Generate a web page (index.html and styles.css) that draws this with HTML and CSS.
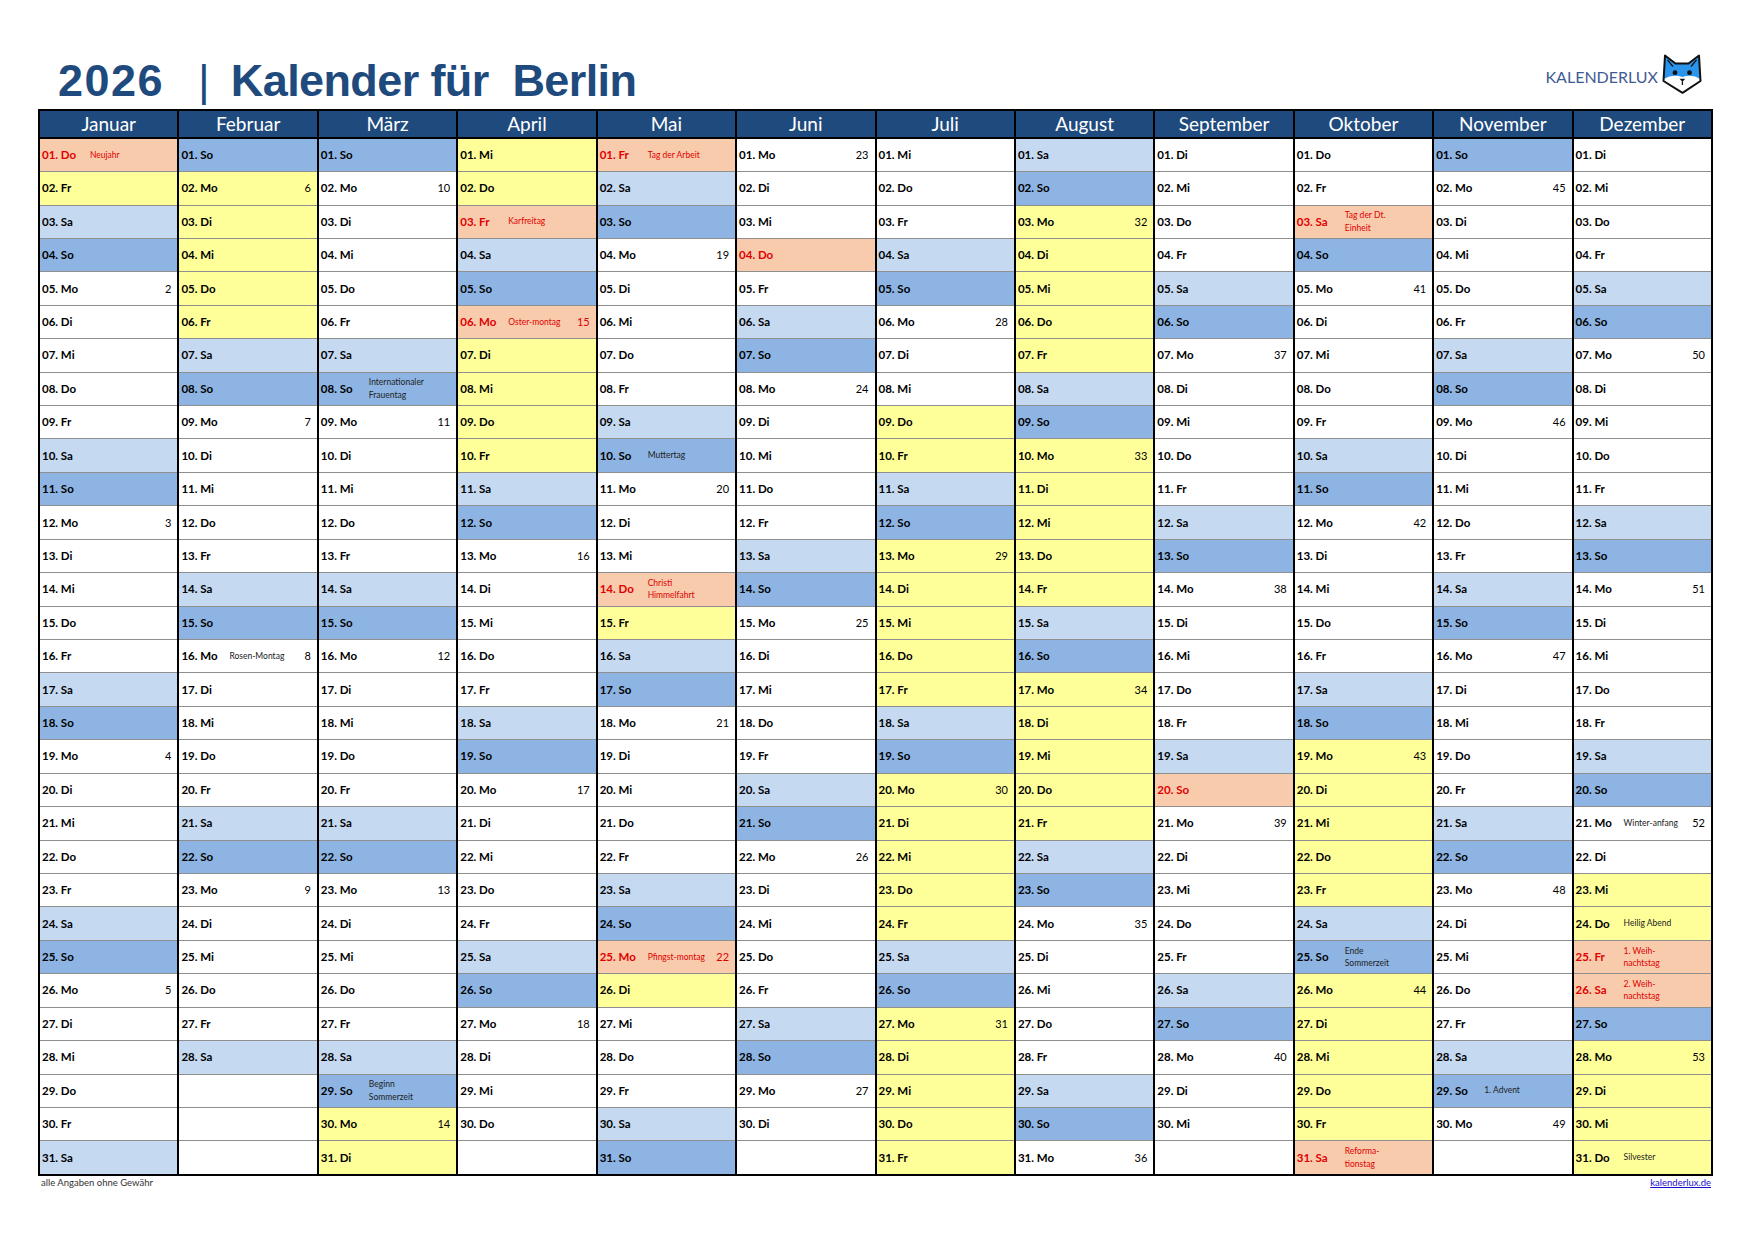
FILE: index.html
```html
<!DOCTYPE html>
<html lang="de">
<head>
<meta charset="utf-8">
<title>2026 | Kalender für Berlin</title>
<link rel="stylesheet" href="styles.css">
</head>
<body>
<div class="page">
  <header class="top">
    <h1 class="title"><span class="year">2026</span><span class="pipe">|</span><span class="place">Kalender für&nbsp; Berlin</span></h1>
    <div class="logo">
      <span class="logo-text">KALENDERLUX</span>
      <svg class="fox" viewBox="0 0 40 40" width="40" height="40" aria-hidden="true">
        <path d="M3 1.5 L13.5 9.5 H26.5 L37 1.5 L38.5 27 L20.5 38.8 L1.5 27 Z" fill="#2b95ec"/>
        <path d="M1.6 25 Q11 19.5 20.5 23 Q30 19.5 38.4 25 L38.5 27 L20.5 38.8 L1.5 27 Z" fill="#fff"/>
        <path d="M3 1.5 L13.5 9.5 H26.5 L37 1.5 L38.5 27 L20.5 38.8 L1.5 27 Z" fill="none" stroke="#111" stroke-width="2" stroke-linejoin="round"/>
        <path d="M5.5 6 L11 12.5 M34.5 6 L29 12.5" stroke="#111" stroke-width="1.2" fill="none"/>
        <circle cx="13" cy="18.7" r="2.4" fill="#111"/>
        <circle cx="27.5" cy="18.7" r="2.4" fill="#111"/>
        <path d="M17.6 24.8 H23.2 L20.4 28 Z" fill="#111"/>
        <path d="M20.4 27.5 V31" stroke="#111" stroke-width="1.3"/>
      </svg>
    </div>
  </header>

  <div class="cal">
    <div class="m">
      <div class="mh">Januar</div>
      <div class="c hol"><b>01. Do</b><small>Neujahr</small></div>
      <div class="c fe"><b>02. Fr</b></div>
      <div class="c sa"><b>03. Sa</b></div>
      <div class="c so"><b>04. So</b></div>
      <div class="c"><b>05. Mo</b><span>2</span></div>
      <div class="c"><b>06. Di</b></div>
      <div class="c"><b>07. Mi</b></div>
      <div class="c"><b>08. Do</b></div>
      <div class="c"><b>09. Fr</b></div>
      <div class="c sa"><b>10. Sa</b></div>
      <div class="c so"><b>11. So</b></div>
      <div class="c"><b>12. Mo</b><span>3</span></div>
      <div class="c"><b>13. Di</b></div>
      <div class="c"><b>14. Mi</b></div>
      <div class="c"><b>15. Do</b></div>
      <div class="c"><b>16. Fr</b></div>
      <div class="c sa"><b>17. Sa</b></div>
      <div class="c so"><b>18. So</b></div>
      <div class="c"><b>19. Mo</b><span>4</span></div>
      <div class="c"><b>20. Di</b></div>
      <div class="c"><b>21. Mi</b></div>
      <div class="c"><b>22. Do</b></div>
      <div class="c"><b>23. Fr</b></div>
      <div class="c sa"><b>24. Sa</b></div>
      <div class="c so"><b>25. So</b></div>
      <div class="c"><b>26. Mo</b><span>5</span></div>
      <div class="c"><b>27. Di</b></div>
      <div class="c"><b>28. Mi</b></div>
      <div class="c"><b>29. Do</b></div>
      <div class="c"><b>30. Fr</b></div>
      <div class="c sa"><b>31. Sa</b></div>
    </div>

    <div class="m">
      <div class="mh">Februar</div>
      <div class="c so"><b>01. So</b></div>
      <div class="c fe"><b>02. Mo</b><span>6</span></div>
      <div class="c fe"><b>03. Di</b></div>
      <div class="c fe"><b>04. Mi</b></div>
      <div class="c fe"><b>05. Do</b></div>
      <div class="c fe"><b>06. Fr</b></div>
      <div class="c sa"><b>07. Sa</b></div>
      <div class="c so"><b>08. So</b></div>
      <div class="c"><b>09. Mo</b><span>7</span></div>
      <div class="c"><b>10. Di</b></div>
      <div class="c"><b>11. Mi</b></div>
      <div class="c"><b>12. Do</b></div>
      <div class="c"><b>13. Fr</b></div>
      <div class="c sa"><b>14. Sa</b></div>
      <div class="c so"><b>15. So</b></div>
      <div class="c"><b>16. Mo</b><small>Rosen-Montag</small><span>8</span></div>
      <div class="c"><b>17. Di</b></div>
      <div class="c"><b>18. Mi</b></div>
      <div class="c"><b>19. Do</b></div>
      <div class="c"><b>20. Fr</b></div>
      <div class="c sa"><b>21. Sa</b></div>
      <div class="c so"><b>22. So</b></div>
      <div class="c"><b>23. Mo</b><span>9</span></div>
      <div class="c"><b>24. Di</b></div>
      <div class="c"><b>25. Mi</b></div>
      <div class="c"><b>26. Do</b></div>
      <div class="c"><b>27. Fr</b></div>
      <div class="c sa"><b>28. Sa</b></div>
      <div class="c"></div>
      <div class="c"></div>
      <div class="c"></div>
    </div>

    <div class="m">
      <div class="mh">März</div>
      <div class="c so"><b>01. So</b></div>
      <div class="c"><b>02. Mo</b><span>10</span></div>
      <div class="c"><b>03. Di</b></div>
      <div class="c"><b>04. Mi</b></div>
      <div class="c"><b>05. Do</b></div>
      <div class="c"><b>06. Fr</b></div>
      <div class="c sa"><b>07. Sa</b></div>
      <div class="c so"><b>08. So</b><small>Internationaler<br>Frauentag</small></div>
      <div class="c"><b>09. Mo</b><span>11</span></div>
      <div class="c"><b>10. Di</b></div>
      <div class="c"><b>11. Mi</b></div>
      <div class="c"><b>12. Do</b></div>
      <div class="c"><b>13. Fr</b></div>
      <div class="c sa"><b>14. Sa</b></div>
      <div class="c so"><b>15. So</b></div>
      <div class="c"><b>16. Mo</b><span>12</span></div>
      <div class="c"><b>17. Di</b></div>
      <div class="c"><b>18. Mi</b></div>
      <div class="c"><b>19. Do</b></div>
      <div class="c"><b>20. Fr</b></div>
      <div class="c sa"><b>21. Sa</b></div>
      <div class="c so"><b>22. So</b></div>
      <div class="c"><b>23. Mo</b><span>13</span></div>
      <div class="c"><b>24. Di</b></div>
      <div class="c"><b>25. Mi</b></div>
      <div class="c"><b>26. Do</b></div>
      <div class="c"><b>27. Fr</b></div>
      <div class="c sa"><b>28. Sa</b></div>
      <div class="c so"><b>29. So</b><small>Beginn<br>Sommerzeit</small></div>
      <div class="c fe"><b>30. Mo</b><span>14</span></div>
      <div class="c fe"><b>31. Di</b></div>
    </div>

    <div class="m">
      <div class="mh">April</div>
      <div class="c fe"><b>01. Mi</b></div>
      <div class="c fe"><b>02. Do</b></div>
      <div class="c hol"><b>03. Fr</b><small>Karfreitag</small></div>
      <div class="c sa"><b>04. Sa</b></div>
      <div class="c so"><b>05. So</b></div>
      <div class="c hol"><b>06. Mo</b><small>Oster-montag</small><span>15</span></div>
      <div class="c fe"><b>07. Di</b></div>
      <div class="c fe"><b>08. Mi</b></div>
      <div class="c fe"><b>09. Do</b></div>
      <div class="c fe"><b>10. Fr</b></div>
      <div class="c sa"><b>11. Sa</b></div>
      <div class="c so"><b>12. So</b></div>
      <div class="c"><b>13. Mo</b><span>16</span></div>
      <div class="c"><b>14. Di</b></div>
      <div class="c"><b>15. Mi</b></div>
      <div class="c"><b>16. Do</b></div>
      <div class="c"><b>17. Fr</b></div>
      <div class="c sa"><b>18. Sa</b></div>
      <div class="c so"><b>19. So</b></div>
      <div class="c"><b>20. Mo</b><span>17</span></div>
      <div class="c"><b>21. Di</b></div>
      <div class="c"><b>22. Mi</b></div>
      <div class="c"><b>23. Do</b></div>
      <div class="c"><b>24. Fr</b></div>
      <div class="c sa"><b>25. Sa</b></div>
      <div class="c so"><b>26. So</b></div>
      <div class="c"><b>27. Mo</b><span>18</span></div>
      <div class="c"><b>28. Di</b></div>
      <div class="c"><b>29. Mi</b></div>
      <div class="c"><b>30. Do</b></div>
      <div class="c"></div>
    </div>

    <div class="m">
      <div class="mh">Mai</div>
      <div class="c hol"><b>01. Fr</b><small>Tag der Arbeit</small></div>
      <div class="c sa"><b>02. Sa</b></div>
      <div class="c so"><b>03. So</b></div>
      <div class="c"><b>04. Mo</b><span>19</span></div>
      <div class="c"><b>05. Di</b></div>
      <div class="c"><b>06. Mi</b></div>
      <div class="c"><b>07. Do</b></div>
      <div class="c"><b>08. Fr</b></div>
      <div class="c sa"><b>09. Sa</b></div>
      <div class="c so"><b>10. So</b><small>Muttertag</small></div>
      <div class="c"><b>11. Mo</b><span>20</span></div>
      <div class="c"><b>12. Di</b></div>
      <div class="c"><b>13. Mi</b></div>
      <div class="c hol"><b>14. Do</b><small>Christi<br>Himmelfahrt</small></div>
      <div class="c fe"><b>15. Fr</b></div>
      <div class="c sa"><b>16. Sa</b></div>
      <div class="c so"><b>17. So</b></div>
      <div class="c"><b>18. Mo</b><span>21</span></div>
      <div class="c"><b>19. Di</b></div>
      <div class="c"><b>20. Mi</b></div>
      <div class="c"><b>21. Do</b></div>
      <div class="c"><b>22. Fr</b></div>
      <div class="c sa"><b>23. Sa</b></div>
      <div class="c so"><b>24. So</b></div>
      <div class="c hol"><b>25. Mo</b><small>Pfingst-montag</small><span>22</span></div>
      <div class="c fe"><b>26. Di</b></div>
      <div class="c"><b>27. Mi</b></div>
      <div class="c"><b>28. Do</b></div>
      <div class="c"><b>29. Fr</b></div>
      <div class="c sa"><b>30. Sa</b></div>
      <div class="c so"><b>31. So</b></div>
    </div>

    <div class="m">
      <div class="mh">Juni</div>
      <div class="c"><b>01. Mo</b><span>23</span></div>
      <div class="c"><b>02. Di</b></div>
      <div class="c"><b>03. Mi</b></div>
      <div class="c hol"><b>04. Do</b></div>
      <div class="c"><b>05. Fr</b></div>
      <div class="c sa"><b>06. Sa</b></div>
      <div class="c so"><b>07. So</b></div>
      <div class="c"><b>08. Mo</b><span>24</span></div>
      <div class="c"><b>09. Di</b></div>
      <div class="c"><b>10. Mi</b></div>
      <div class="c"><b>11. Do</b></div>
      <div class="c"><b>12. Fr</b></div>
      <div class="c sa"><b>13. Sa</b></div>
      <div class="c so"><b>14. So</b></div>
      <div class="c"><b>15. Mo</b><span>25</span></div>
      <div class="c"><b>16. Di</b></div>
      <div class="c"><b>17. Mi</b></div>
      <div class="c"><b>18. Do</b></div>
      <div class="c"><b>19. Fr</b></div>
      <div class="c sa"><b>20. Sa</b></div>
      <div class="c so"><b>21. So</b></div>
      <div class="c"><b>22. Mo</b><span>26</span></div>
      <div class="c"><b>23. Di</b></div>
      <div class="c"><b>24. Mi</b></div>
      <div class="c"><b>25. Do</b></div>
      <div class="c"><b>26. Fr</b></div>
      <div class="c sa"><b>27. Sa</b></div>
      <div class="c so"><b>28. So</b></div>
      <div class="c"><b>29. Mo</b><span>27</span></div>
      <div class="c"><b>30. Di</b></div>
      <div class="c"></div>
    </div>

    <div class="m">
      <div class="mh">Juli</div>
      <div class="c"><b>01. Mi</b></div>
      <div class="c"><b>02. Do</b></div>
      <div class="c"><b>03. Fr</b></div>
      <div class="c sa"><b>04. Sa</b></div>
      <div class="c so"><b>05. So</b></div>
      <div class="c"><b>06. Mo</b><span>28</span></div>
      <div class="c"><b>07. Di</b></div>
      <div class="c"><b>08. Mi</b></div>
      <div class="c fe"><b>09. Do</b></div>
      <div class="c fe"><b>10. Fr</b></div>
      <div class="c sa"><b>11. Sa</b></div>
      <div class="c so"><b>12. So</b></div>
      <div class="c fe"><b>13. Mo</b><span>29</span></div>
      <div class="c fe"><b>14. Di</b></div>
      <div class="c fe"><b>15. Mi</b></div>
      <div class="c fe"><b>16. Do</b></div>
      <div class="c fe"><b>17. Fr</b></div>
      <div class="c sa"><b>18. Sa</b></div>
      <div class="c so"><b>19. So</b></div>
      <div class="c fe"><b>20. Mo</b><span>30</span></div>
      <div class="c fe"><b>21. Di</b></div>
      <div class="c fe"><b>22. Mi</b></div>
      <div class="c fe"><b>23. Do</b></div>
      <div class="c fe"><b>24. Fr</b></div>
      <div class="c sa"><b>25. Sa</b></div>
      <div class="c so"><b>26. So</b></div>
      <div class="c fe"><b>27. Mo</b><span>31</span></div>
      <div class="c fe"><b>28. Di</b></div>
      <div class="c fe"><b>29. Mi</b></div>
      <div class="c fe"><b>30. Do</b></div>
      <div class="c fe"><b>31. Fr</b></div>
    </div>

    <div class="m">
      <div class="mh">August</div>
      <div class="c sa"><b>01. Sa</b></div>
      <div class="c so"><b>02. So</b></div>
      <div class="c fe"><b>03. Mo</b><span>32</span></div>
      <div class="c fe"><b>04. Di</b></div>
      <div class="c fe"><b>05. Mi</b></div>
      <div class="c fe"><b>06. Do</b></div>
      <div class="c fe"><b>07. Fr</b></div>
      <div class="c sa"><b>08. Sa</b></div>
      <div class="c so"><b>09. So</b></div>
      <div class="c fe"><b>10. Mo</b><span>33</span></div>
      <div class="c fe"><b>11. Di</b></div>
      <div class="c fe"><b>12. Mi</b></div>
      <div class="c fe"><b>13. Do</b></div>
      <div class="c fe"><b>14. Fr</b></div>
      <div class="c sa"><b>15. Sa</b></div>
      <div class="c so"><b>16. So</b></div>
      <div class="c fe"><b>17. Mo</b><span>34</span></div>
      <div class="c fe"><b>18. Di</b></div>
      <div class="c fe"><b>19. Mi</b></div>
      <div class="c fe"><b>20. Do</b></div>
      <div class="c fe"><b>21. Fr</b></div>
      <div class="c sa"><b>22. Sa</b></div>
      <div class="c so"><b>23. So</b></div>
      <div class="c"><b>24. Mo</b><span>35</span></div>
      <div class="c"><b>25. Di</b></div>
      <div class="c"><b>26. Mi</b></div>
      <div class="c"><b>27. Do</b></div>
      <div class="c"><b>28. Fr</b></div>
      <div class="c sa"><b>29. Sa</b></div>
      <div class="c so"><b>30. So</b></div>
      <div class="c"><b>31. Mo</b><span>36</span></div>
    </div>

    <div class="m">
      <div class="mh">September</div>
      <div class="c"><b>01. Di</b></div>
      <div class="c"><b>02. Mi</b></div>
      <div class="c"><b>03. Do</b></div>
      <div class="c"><b>04. Fr</b></div>
      <div class="c sa"><b>05. Sa</b></div>
      <div class="c so"><b>06. So</b></div>
      <div class="c"><b>07. Mo</b><span>37</span></div>
      <div class="c"><b>08. Di</b></div>
      <div class="c"><b>09. Mi</b></div>
      <div class="c"><b>10. Do</b></div>
      <div class="c"><b>11. Fr</b></div>
      <div class="c sa"><b>12. Sa</b></div>
      <div class="c so"><b>13. So</b></div>
      <div class="c"><b>14. Mo</b><span>38</span></div>
      <div class="c"><b>15. Di</b></div>
      <div class="c"><b>16. Mi</b></div>
      <div class="c"><b>17. Do</b></div>
      <div class="c"><b>18. Fr</b></div>
      <div class="c sa"><b>19. Sa</b></div>
      <div class="c hol"><b>20. So</b></div>
      <div class="c"><b>21. Mo</b><span>39</span></div>
      <div class="c"><b>22. Di</b></div>
      <div class="c"><b>23. Mi</b></div>
      <div class="c"><b>24. Do</b></div>
      <div class="c"><b>25. Fr</b></div>
      <div class="c sa"><b>26. Sa</b></div>
      <div class="c so"><b>27. So</b></div>
      <div class="c"><b>28. Mo</b><span>40</span></div>
      <div class="c"><b>29. Di</b></div>
      <div class="c"><b>30. Mi</b></div>
      <div class="c"></div>
    </div>

    <div class="m">
      <div class="mh">Oktober</div>
      <div class="c"><b>01. Do</b></div>
      <div class="c"><b>02. Fr</b></div>
      <div class="c hol"><b>03. Sa</b><small>Tag der Dt.<br>Einheit</small></div>
      <div class="c so"><b>04. So</b></div>
      <div class="c"><b>05. Mo</b><span>41</span></div>
      <div class="c"><b>06. Di</b></div>
      <div class="c"><b>07. Mi</b></div>
      <div class="c"><b>08. Do</b></div>
      <div class="c"><b>09. Fr</b></div>
      <div class="c sa"><b>10. Sa</b></div>
      <div class="c so"><b>11. So</b></div>
      <div class="c"><b>12. Mo</b><span>42</span></div>
      <div class="c"><b>13. Di</b></div>
      <div class="c"><b>14. Mi</b></div>
      <div class="c"><b>15. Do</b></div>
      <div class="c"><b>16. Fr</b></div>
      <div class="c sa"><b>17. Sa</b></div>
      <div class="c so"><b>18. So</b></div>
      <div class="c fe"><b>19. Mo</b><span>43</span></div>
      <div class="c fe"><b>20. Di</b></div>
      <div class="c fe"><b>21. Mi</b></div>
      <div class="c fe"><b>22. Do</b></div>
      <div class="c fe"><b>23. Fr</b></div>
      <div class="c sa"><b>24. Sa</b></div>
      <div class="c so"><b>25. So</b><small>Ende<br>Sommerzeit</small></div>
      <div class="c fe"><b>26. Mo</b><span>44</span></div>
      <div class="c fe"><b>27. Di</b></div>
      <div class="c fe"><b>28. Mi</b></div>
      <div class="c fe"><b>29. Do</b></div>
      <div class="c fe"><b>30. Fr</b></div>
      <div class="c hol"><b>31. Sa</b><small>Reforma-<br>tionstag</small></div>
    </div>

    <div class="m">
      <div class="mh">November</div>
      <div class="c so"><b>01. So</b></div>
      <div class="c"><b>02. Mo</b><span>45</span></div>
      <div class="c"><b>03. Di</b></div>
      <div class="c"><b>04. Mi</b></div>
      <div class="c"><b>05. Do</b></div>
      <div class="c"><b>06. Fr</b></div>
      <div class="c sa"><b>07. Sa</b></div>
      <div class="c so"><b>08. So</b></div>
      <div class="c"><b>09. Mo</b><span>46</span></div>
      <div class="c"><b>10. Di</b></div>
      <div class="c"><b>11. Mi</b></div>
      <div class="c"><b>12. Do</b></div>
      <div class="c"><b>13. Fr</b></div>
      <div class="c sa"><b>14. Sa</b></div>
      <div class="c so"><b>15. So</b></div>
      <div class="c"><b>16. Mo</b><span>47</span></div>
      <div class="c"><b>17. Di</b></div>
      <div class="c"><b>18. Mi</b></div>
      <div class="c"><b>19. Do</b></div>
      <div class="c"><b>20. Fr</b></div>
      <div class="c sa"><b>21. Sa</b></div>
      <div class="c so"><b>22. So</b></div>
      <div class="c"><b>23. Mo</b><span>48</span></div>
      <div class="c"><b>24. Di</b></div>
      <div class="c"><b>25. Mi</b></div>
      <div class="c"><b>26. Do</b></div>
      <div class="c"><b>27. Fr</b></div>
      <div class="c sa"><b>28. Sa</b></div>
      <div class="c so"><b>29. So</b><small>1. Advent</small></div>
      <div class="c"><b>30. Mo</b><span>49</span></div>
      <div class="c"></div>
    </div>

    <div class="m">
      <div class="mh">Dezember</div>
      <div class="c"><b>01. Di</b></div>
      <div class="c"><b>02. Mi</b></div>
      <div class="c"><b>03. Do</b></div>
      <div class="c"><b>04. Fr</b></div>
      <div class="c sa"><b>05. Sa</b></div>
      <div class="c so"><b>06. So</b></div>
      <div class="c"><b>07. Mo</b><span>50</span></div>
      <div class="c"><b>08. Di</b></div>
      <div class="c"><b>09. Mi</b></div>
      <div class="c"><b>10. Do</b></div>
      <div class="c"><b>11. Fr</b></div>
      <div class="c sa"><b>12. Sa</b></div>
      <div class="c so"><b>13. So</b></div>
      <div class="c"><b>14. Mo</b><span>51</span></div>
      <div class="c"><b>15. Di</b></div>
      <div class="c"><b>16. Mi</b></div>
      <div class="c"><b>17. Do</b></div>
      <div class="c"><b>18. Fr</b></div>
      <div class="c sa"><b>19. Sa</b></div>
      <div class="c so"><b>20. So</b></div>
      <div class="c"><b>21. Mo</b><small>Winter-anfang</small><span>52</span></div>
      <div class="c"><b>22. Di</b></div>
      <div class="c fe"><b>23. Mi</b></div>
      <div class="c fe"><b>24. Do</b><small>Heilig Abend</small></div>
      <div class="c hol"><b>25. Fr</b><small>1. Weih-<br>nachtstag</small></div>
      <div class="c hol"><b>26. Sa</b><small>2. Weih-<br>nachtstag</small></div>
      <div class="c so"><b>27. So</b></div>
      <div class="c fe"><b>28. Mo</b><span>53</span></div>
      <div class="c fe"><b>29. Di</b></div>
      <div class="c fe"><b>30. Mi</b></div>
      <div class="c fe"><b>31. Do</b><small>Silvester</small></div>
    </div>
  </div>

  <footer class="foot">
    <span>alle Angaben ohne Gewähr</span>
    <a href="#">kalenderlux.de</a>
  </footer>
</div>
</body>
</html>
```

FILE: styles.css
```css
* { box-sizing: border-box; }

body {
  margin: 0;
  background: #fff;
  font-family: Lato, "Open Sans", "Liberation Sans", sans-serif;
  color: #000;
}

.page {
  width: 1753px;
  height: 1239px;
  padding-left: 38px;
}

.top {
  width: 1675px;
  height: 109px;
  display: flex;
  justify-content: space-between;
  align-items: flex-start;
}

.title {
  margin: 58px 0 0 20px;
  display: flex;
  font-family: "Liberation Sans", Arial, sans-serif;
  font-weight: 700;
  font-size: 45px;
  line-height: 45px;
  color: #1f4a7d;
  white-space: nowrap;
}

.year { letter-spacing: 1.5px; }

.pipe {
  margin: 0 21px 0 34px;
  font-weight: 400;
}

.place { letter-spacing: -0.6px; }

.logo {
  margin: 54px 11px 0 0;
  display: flex;
  align-items: flex-start;
  gap: 4px;
}

.logo-text {
  margin-top: 13px;
  font-family: Lato, "Open Sans", sans-serif;
  font-size: 16px;
  line-height: 20px;
  color: #3f5b93;
}

.fox { display: block; }

.cal {
  width: 1675px;
  height: 1067px;
  border: 2px solid #000;
  background: #000;
  display: grid;
  grid-template-columns: repeat(12, 1fr);
  column-gap: 2px;
}

.m {
  display: flex;
  flex-direction: column;
  background: #fff;
  min-width: 0;
}

.mh {
  flex: none;
  height: 27.7px;
  background: #1f4a7d;
  color: #fff;
  font-size: 19px;
  line-height: 25.7px;
  text-align: center;
  border-bottom: 2px solid #000;
}

.c {
  flex: 1 1 0;
  min-height: 0;
  display: flex;
  align-items: center;
  padding: 0 6px 0 2px;
  border-top: 1.6px solid #8f8f8f;
  font-size: 11.5px;
  line-height: 14px;
  white-space: nowrap;
}

.mh + .c { border-top: none; }

.c b {
  flex: none;
  width: 48px;
  font-weight: 700;
}

.c small {
  font-size: 8.5px;
  line-height: 12.5px;
  color: #222;
}

.c span {
  margin-left: auto;
  font-size: 11px;
}

.sa { background: #c5d9f1; }
.so { background: #8db4e2; }
.fe { background: #ffff99; }
.hol { background: #f8cbad; color: #e00000; }
.hol small { color: #e00000; }

.foot {
  width: 1675px;
  display: flex;
  justify-content: space-between;
  padding: 1px 2px 0 3px;
  font-size: 9.5px;
  line-height: 12px;
  color: #333;
}

.foot a { color: #1a0dcc; text-decoration: underline; }
```
